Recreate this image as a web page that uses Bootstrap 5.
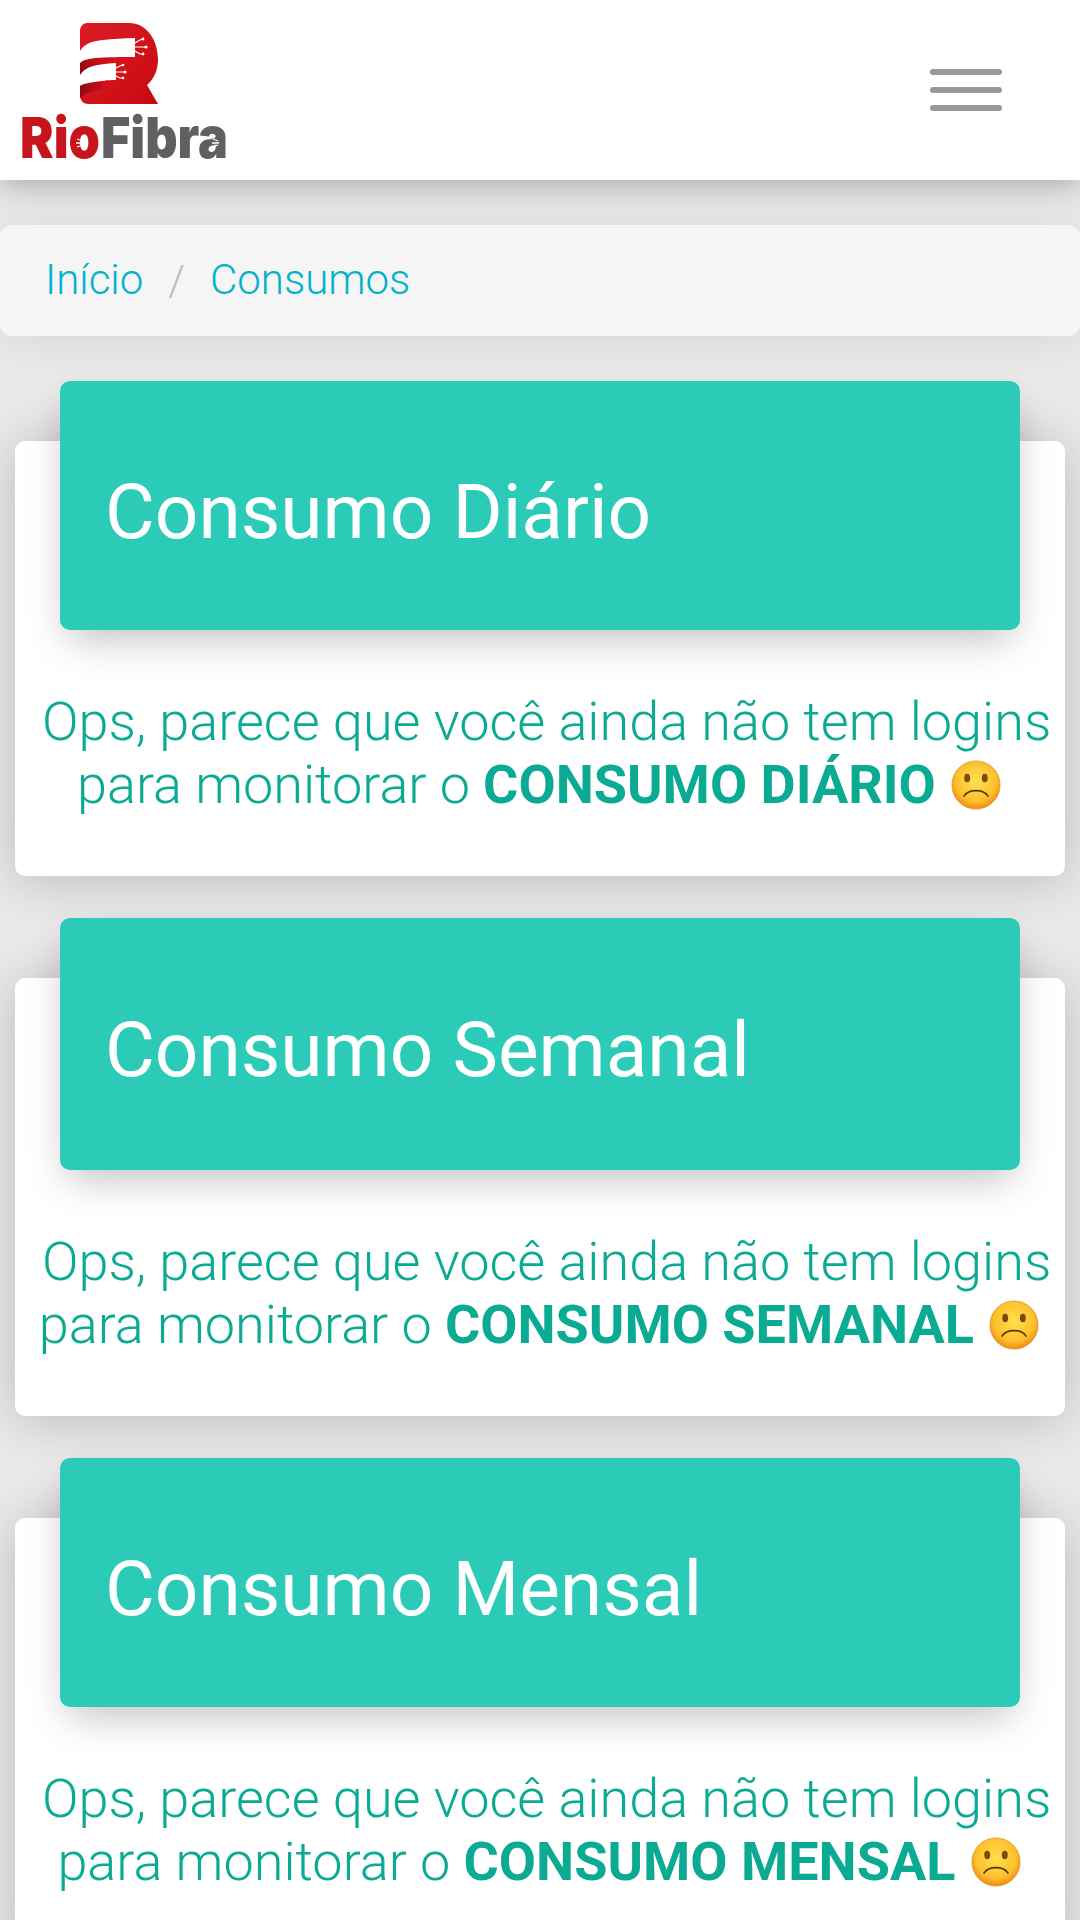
<!DOCTYPE html>
<html lang="pt-BR">
<head>
<meta charset="utf-8">
<title>Consumos</title>
<link href="https://cdn.jsdelivr.net/npm/bootstrap@5.3.0/dist/css/bootstrap.min.css" rel="stylesheet">
<style>
html,body{height:1920px;overflow:hidden}
body{background:#e9e9e9;font-family:Roboto,"Liberation Sans",sans-serif;font-weight:300}
.top-bar{height:180px;background:#fff;padding:0;box-shadow:0 4px 30px rgba(0,0,0,.3);position:relative;z-index:2}
.brand-mark{width:240px;height:180px;display:block}
.wordmark{font-family:Inter,Roboto,sans-serif;font-weight:900;font-size:57px}
.burger{width:72px;margin-right:78px;gap:12px}
.burger span{display:block;height:6px;border-radius:3px;background:#999}
.crumbs{height:111px;margin:45px 0 105px;padding:0 45px;background:#f5f5f5;border-radius:12px;font-size:42px;line-height:1;align-items:center;box-shadow:0 4px 40px rgba(0,0,0,.08)}
.crumbs .breadcrumb-item+.breadcrumb-item{padding-left:25px}
.crumbs .breadcrumb-item+.breadcrumb-item::before{color:#bbb;padding-right:25px;font-weight:300}
.crumbs a{color:#00b2cc;text-decoration:none;position:relative;top:-1px}
.usage-card{margin:0 15px 102px;border:0;border-radius:10px;background:#fff;box-shadow:0 4px 50px rgba(0,0,0,.2)}
.usage-card .card-header{margin:-60px 45px 0;padding:0 45px;height:249px;display:flex;align-items:center;background:#2bcbb7;border:0;border-radius:10px;color:#fff;box-shadow:0 16px 40px -8px rgba(0,0,0,.26)}
.usage-card .card-header.header-tall{height:252px}
.usage-card .card-header h4{font-size:76.6px;font-weight:400;margin:14px 0 0;line-height:1.2}
.usage-card .card-body{padding:60px 8px 60px;text-align:center;color:#0bab93;font-size:54px;line-height:63px}
.usage-card b{font-weight:700}
.sad{width:50px;height:50px;vertical-align:-7px;margin-left:2px;margin-right:2px}
</style>
</head>
<body>
<nav class="navbar top-bar">
  <div class="d-flex w-100 align-items-center justify-content-between">
    <svg class="brand-mark" viewBox="0 0 240 180" role="img" aria-label="RioFibra">
      <defs><linearGradient id="rg" x1="0" y1="0" x2="1" y2="1"><stop offset="0" stop-color="#dc1c22"/><stop offset="1" stop-color="#c70a12"/></linearGradient>
      <linearGradient id="sh" x1="0" y1="0" x2="1" y2="0"><stop offset="0" stop-color="#8f0a10"/><stop offset="1" stop-color="#c70a12" stop-opacity="0"/></linearGradient></defs>
      <path fill="url(#rg)" d="M87 23h42c17 0 29 16 29 37 0 11-5 20-11 25l11 19H88c-5 0-8-4-8-9V31c0-4 3-8 7-8z"/>
      <path fill="url(#sh)" d="M80 62c6-4 24-5 36-5v8c-14 0-30 3-36 10zM80 85c5-3 12-3 22-3v8c-10 0-17 3-22 8z"/>
      <path fill="#fff" d="M80 51c4-7 12-10 23-11 10-1 20-2 32-2v19c-13 0-30 0-40 1-7 1-12 2-15 5zM80 75c4-6 10-9 18-10 6-1 12-2 18-2v17c-9 0-15 1-22 2-7 1-11 2-14 4z"/>
      <g stroke="#fff" stroke-width="1.2" fill="none"><path d="M135 47h10M135 43l5-3 3-1M135 51l5 3 3 0M116 72h8M116 68l4-2 3-1M116 76l4 2 3 0"/></g>
      <g fill="#fff"><circle cx="146" cy="47" r="1.6"/><circle cx="143" cy="39" r="1.4"/><circle cx="143" cy="54" r="1.4"/><circle cx="125" cy="72" r="1.5"/><circle cx="123" cy="65" r="1.3"/><circle cx="123" cy="78" r="1.3"/></g>
      <text x="20" y="158" class="wordmark" fill="#c8141c" textLength="80" lengthAdjust="spacingAndGlyphs">Rio</text>
      <text x="101" y="158" class="wordmark" fill="#5f6062" textLength="127" lengthAdjust="spacingAndGlyphs">Fibra</text>
      <g stroke="#fff" stroke-width="1.3" fill="none"><path d="M76 143h10M77 139l6 2M77 147l6-2M212 143h7M213 139l5 2M213 147l5-2"/></g>
    </svg>
    <div class="burger d-flex flex-column"><span></span><span></span><span></span></div>
  </div>
</nav>
<nav aria-label="breadcrumb">
  <ol class="breadcrumb crumbs">
    <li class="breadcrumb-item"><a href="#">Início</a></li>
    <li class="breadcrumb-item"><a href="#">Consumos</a></li>
  </ol>
</nav>
<div class="card usage-card">
  <div class="card-header"><h4>Consumo Diário</h4></div>
  <div class="card-body">&nbsp;Ops, parece que você ainda não tem logins para monitorar o <b>CONSUMO DIÁRIO</b>
    <svg class="sad" viewBox="0 0 54 54"><use href="#sadface"/></svg></div>
</div>
<div class="card usage-card">
  <div class="card-header header-tall"><h4>Consumo Semanal</h4></div>
  <div class="card-body">&nbsp;Ops, parece que você ainda não tem logins para monitorar o <b>CONSUMO SEMANAL</b>
    <svg class="sad" viewBox="0 0 54 54"><use href="#sadface"/></svg></div>
</div>
<div class="card usage-card">
  <div class="card-header"><h4>Consumo Mensal</h4></div>
  <div class="card-body">&nbsp;Ops, parece que você ainda não tem logins para monitorar o <b>CONSUMO MENSAL</b>
    <svg class="sad" viewBox="0 0 54 54"><use href="#sadface"/></svg></div>
</div>
<svg width="0" height="0" class="position-absolute">
  <defs>
    <radialGradient id="fg" cx=".5" cy=".42" r=".58"><stop offset="0" stop-color="#ffe04f"/><stop offset=".72" stop-color="#fdc02c"/><stop offset="1" stop-color="#ee8a16"/></radialGradient>
    <symbol id="sadface" viewBox="0 0 54 54">
      <circle cx="27" cy="27" r="26" fill="url(#fg)" stroke="#d9922a" stroke-width=".8"/>
      <ellipse cx="17.5" cy="19.5" rx="3.2" ry="4.6" fill="#7a4a08"/>
      <ellipse cx="36.5" cy="19.5" rx="3.2" ry="4.6" fill="#7a4a08"/>
      <path d="M14 39c5-8 21-8 26 0" fill="none" stroke="#5d3906" stroke-width="1.8" stroke-linecap="round"/>
    </symbol>
  </defs>
</svg>
</body>
</html>
